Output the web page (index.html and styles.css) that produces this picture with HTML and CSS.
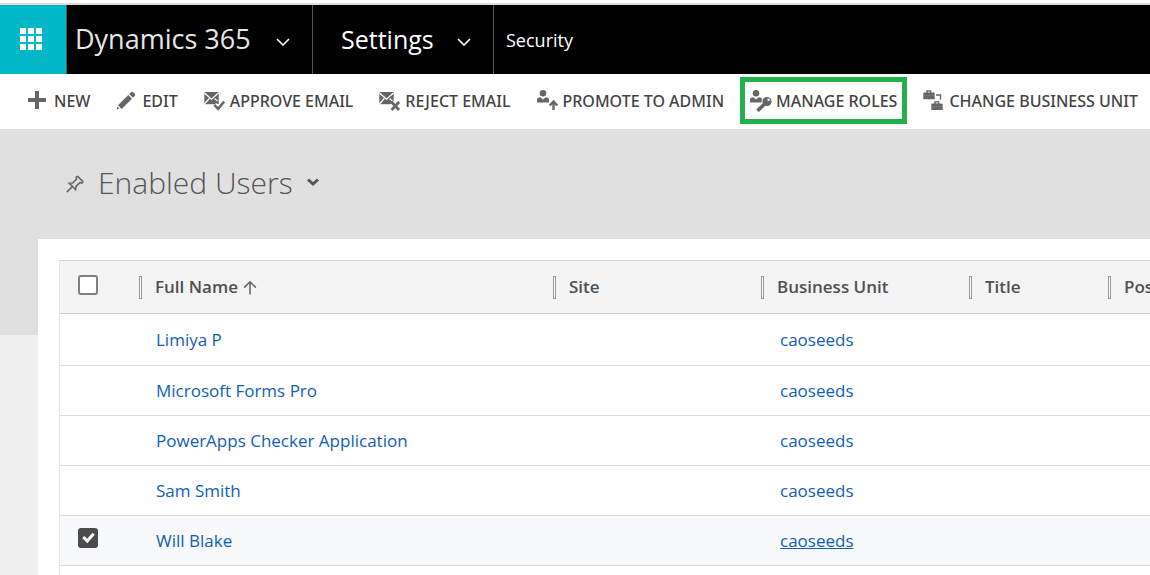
FILE: index.html
```
<!DOCTYPE html>
<html lang="en">
<head>
<meta charset="utf-8">
<title>Enabled Users - Dynamics 365</title>
<link rel="stylesheet" href="styles.css">
</head>
<body>
<header class="topbar">
  <button class="launcher" aria-label="App launcher">
    <svg width="22" height="22" viewBox="0 0 22 22" fill="#fff" aria-hidden="true"><path d="M0 0h6v6H0zM8 0h6v6H8zM16 0h6v6h-6zM0 8h6v6H0zM8 8h6v6H8zM16 8h6v6h-6zM0 16h6v6H0zM8 16h6v6H8zM16 16h6v6h-6z"/></svg>
  </button>
  <button class="nav nav-product"><span>Dynamics 365</span>
    <svg class="chevron" width="14" height="8" viewBox="0 0 14 8" aria-hidden="true"><path d="M1 1l6 6 6-6" fill="none" stroke="#fff" stroke-width="1.6"/></svg>
  </button>
  <button class="nav nav-area"><span>Settings</span>
    <svg class="chevron" width="14" height="8" viewBox="0 0 14 8" aria-hidden="true"><path d="M1 1l6 6 6-6" fill="none" stroke="#fff" stroke-width="1.6"/></svg>
  </button>
  <a class="nav-page" href="#security">Security</a>
</header>

<nav class="commands" aria-label="Commands">
  <button class="command">
    <svg class="icon" width="22" height="22" viewBox="0 0 22 22" aria-hidden="true"><path d="M7 1h4v7h7v4h-7v7H7v-7H0V8h7z"/></svg>NEW</button>
  <button class="command">
    <svg class="icon" width="22" height="22" viewBox="0 0 22 22" aria-hidden="true"><path d="M.6 19.400l.8-2.800 2 2zM2 15.300L12.300 5l3.700 3.700L5.700 19zM13.200 4.100l1.700-1.700c.9-.8 1.900-.7 2.700.1l1 1c.8.800.8 1.800.1 2.600L17 7.800z"/></svg>EDIT</button>
  <button class="command">
    <svg class="icon" width="22" height="22" viewBox="0 0 22 22" aria-hidden="true"><path d="M.3 2h14.400v12.200H.3z"/><path d="M.3 2.800l7.200 6.400 7.200-6.400M0 14.500l5.300-6M10.500 8.800l3 2" fill="none" stroke="#fff" stroke-width="1.300"/><path d="M10.300 14.800l3.800 4 6-7.200" fill="none" stroke="#fff" stroke-width="5"/><path d="M10.300 14.800l3.800 4 6-7.200" fill="none" stroke="#666" stroke-width="2.500"/></svg>APPROVE EMAIL</button>
  <button class="command">
    <svg class="icon" width="22" height="22" viewBox="0 0 22 22" aria-hidden="true"><path d="M.3 2h14.400v12.200H.3z"/><path d="M.3 2.800l7.200 6.400 7.200-6.400M0 14.500l5.300-6M10.500 8.800l3 2" fill="none" stroke="#fff" stroke-width="1.300"/><path d="M13 12.500l6.600 7M19.600 12.500l-6.600 7" fill="none" stroke="#fff" stroke-width="5"/><path d="M12.500 12l7.600 8M20.100 12l-7.600 8" fill="none" stroke="#666" stroke-width="2.700"/></svg>REJECT EMAIL</button>
  <button class="command">
    <svg class="icon" width="22" height="22" viewBox="0 0 22 22" aria-hidden="true"><circle cx="6" cy="3.300" r="3.300"/><path d="M0 12.500V9.500Q0 7.500 3.300 7.300L6 9.600 8.700 7.300Q12 7.500 12 9.500v3z"/><path d="M16.500 20v-8M12.700 15.500l3.800-4 3.800 4" fill="none" stroke="#666" stroke-width="2.400"/></svg>PROMOTE TO ADMIN</button>
  <button class="command highlighted">
    <svg class="icon" width="22" height="22" viewBox="0 0 22 22" aria-hidden="true"><circle cx="6" cy="3.300" r="3.300"/><path d="M0 12.500V9.500Q0 7.500 3.300 7.300L6 9.600 8.700 7.300Q12 7.500 12 9.500v3z"/><circle cx="17" cy="11.600" r="5.500" fill="#fff"/><path d="M14.500 14L7.500 20.800" stroke="#666" stroke-width="3.600"/><circle cx="17" cy="11.600" r="4.600"/><circle cx="18.600" cy="9.800" r="1.200" fill="#fff"/></svg>MANAGE ROLES</button>
  <button class="command">
    <svg class="icon" width="22" height="22" viewBox="0 0 22 22" aria-hidden="true"><path d="M3.300 2.500V.3h5v2.200h2.500q.9 0 .9.900v5.800H.3V3.400q0-.9.900-.9zM4.800 1.600v.9h2v-.9zM11.300 13.500v-2.200h5v2.200h2.500q.9 0 .9.900v5.600H8.300v-5.600q0-.9.900-.9zM12.800 12.600v.9h2v-.9z"/><path d="M.3 5.700h11.400M8.300 16.700h11.400" stroke="#888" stroke-width=".5"/><path d="M13 5h4.500v4.500" fill="none" stroke="#666" stroke-width="1.400"/></svg>CHANGE BUSINESS UNIT</button>
</nav>

<main class="content">
  <div class="view-head">
    <button class="pin" aria-label="Pin view"><svg width="18" height="18" viewBox="0 0 18 18" aria-hidden="true"><path d="M.8 17.200l5-5M3.200 8.200l6.300 6.300.7-3.500 3.900-3.400 2.200.2.500-1.400-5-5-1.500.6.2 2.200L6.700 8z" fill="none" stroke="#6b6b6b" stroke-width="1.700"/></svg></button>
    <h1 class="view-title">Enabled Users</h1>
    <button class="view-switch" aria-label="Change view"><svg width="12" height="9" viewBox="0 0 12 9" aria-hidden="true"><path d="M1 1.500l5 4.500 5-4.500" fill="none" stroke="#555" stroke-width="3"/></svg></button>
  </div>
  <section class="panel">
    <div class="grid-frame">
      <table class="grid">
        <colgroup><col class="col-check"><col class="col-name"><col class="col-site"><col class="col-unit"><col class="col-title"><col></colgroup>
        <thead>
          <tr>
            <td class="check-cell"><input type="checkbox" class="check" aria-label="Select all"></td>
            <th>Full Name<svg class="sort" width="14" height="15" viewBox="0 0 14 15" aria-hidden="true"><path d="M7 14.500V2M1.200 7.600L7 1.800l5.800 5.800" fill="none" stroke="#666" stroke-width="1.600"/></svg></th>
            <th>Site</th><th>Business Unit</th><th>Title</th><th>Pos</th>
          </tr>
        </thead>
        <tbody>
          <tr><td></td><td><a href="#u1">Limiya P</a></td><td></td><td class="unit"><a href="#bu">caoseeds</a></td><td></td><td></td></tr>
          <tr><td></td><td><a href="#u2">Microsoft Forms Pro</a></td><td></td><td class="unit"><a href="#bu">caoseeds</a></td><td></td><td></td></tr>
          <tr><td></td><td><a href="#u3">PowerApps Checker Application</a></td><td></td><td class="unit"><a href="#bu">caoseeds</a></td><td></td><td></td></tr>
          <tr><td></td><td><a href="#u4">Sam Smith</a></td><td></td><td class="unit"><a href="#bu">caoseeds</a></td><td></td><td></td></tr>
          <tr class="selected"><td class="check-cell"><input type="checkbox" class="check" checked aria-label="Select Will Blake"></td><td><a href="#u5">Will Blake</a></td><td></td><td class="unit"><a class="active" href="#bu">caoseeds</a></td><td></td><td></td></tr>
        </tbody>
      </table>
    </div>
  </section>
</main>
</body>
</html>
```
FILE: styles.css
```
*, *::before { box-sizing: border-box; }

body {
  margin: 0;
  height: 100vh;
  overflow: hidden;
  display: flex;
  flex-direction: column;
  padding-top: 3px;
  background: #fff;
  color: #444;
  font-family: "Segoe UI", "Open Sans", "Noto Sans", sans-serif;
}

button {
  margin: 0;
  padding: 0;
  border: 0;
  background: none;
  color: inherit;
  font: inherit;
  white-space: nowrap;
}

a { color: #1160b7; text-decoration: none; }

svg { display: block; flex: none; }

.topbar {
  flex: none;
  display: flex;
  height: 71px;
  border-top: 2px solid #dcdce0;
  background: #000;
  color: #fff;
}

.launcher {
  display: flex;
  align-items: center;
  justify-content: center;
  width: 66px;
  padding: 0 4px 2px 0;
  background: #00b7c7;
}

.nav {
  display: flex;
  align-items: center;
  justify-content: space-between;
  border-left: 1px solid #555;
  line-height: 36px;
}

.nav-product { width: 246px; padding: 0 22px 2px 8px; color: #e6e6e6; font-size: 27px; }
.nav-area { width: 181px; padding: 0 22px 2px 28px; font-size: 25px; }
.chevron { margin-top: 7px; }

.nav-page {
  display: flex;
  align-items: center;
  border-left: 1px solid #555;
  padding-left: 12px;
  color: #fff;
  font-size: 18px;
}

.commands {
  flex: none;
  display: flex;
  align-items: center;
  gap: 26px;
  height: 55px;
  padding: 0 0 2px 28px;
}

.command {
  display: flex;
  align-items: center;
  gap: 4px;
  height: 37px;
  font-family: "Segoe UI", "Noto Sans", "Open Sans", sans-serif;
  font-size: 16px;
  font-weight: 500;
}

.icon { fill: #666; }

.highlighted {
  outline: 5px solid #22b14c;
  outline-offset: 5px;
  height: 27px;
}

.content {
  flex: 1;
  display: flex;
  flex-direction: column;
  min-height: 0;
  padding-left: 38px;
  background: linear-gradient(#e0e0e0 206px, #f0f0f0 206px);
}

.view-head {
  flex: none;
  display: flex;
  align-items: center;
  height: 110px;
  padding-left: 28px;
}

.view-title {
  margin: 0 14px 2px 14px;
  font-size: 30px;
  font-weight: 300;
  line-height: 44px;
  color: #555;
}

.view-switch { padding-bottom: 4px; }

.panel {
  flex: 1;
  display: flex;
  min-height: 0;
  padding: 21px 0 0 21px;
  background: #fff;
}

.grid-frame {
  flex: 1;
  min-width: 0;
  border-left: 1px solid #e6e6e6;
}

.grid {
  width: 100%;
  table-layout: fixed;
  border-collapse: separate;
  border-spacing: 0;
  font-size: 17px;
}

.col-check { width: 79px; }
.col-name { width: 414px; }
.col-site, .col-unit { width: 208px; }
.col-title { width: 139px; }

.grid th, .grid td {
  height: 50px;
  padding: 0 0 0 17px;
  border-bottom: 1px solid #dcdcdc;
  text-align: left;
  white-space: nowrap;
  overflow: hidden;
}

.grid thead th, .grid thead td {
  height: 54px;
  border-top: 1px solid #d2d2d2;
  border-bottom-color: #d2d2d2;
  background: #f4f4f4;
}

.grid th {
  padding-left: 0;
  font-weight: 600;
  color: #505050;
}

.grid th::before {
  content: "";
  display: inline-block;
  width: 3px;
  height: 23px;
  margin-right: 13px;
  border: 1px solid #999;
  background: #fff;
  vertical-align: middle;
}

.grid tbody tr:first-child td { height: 52px; }
.grid .unit { padding-left: 19px; }
.grid .check-cell { padding-left: 18px; padding-bottom: 4px; }
.grid .selected .check-cell { padding-bottom: 6px; }
.selected td { background: #f8f9fb; }
.active { text-decoration: underline; }

.sort {
  display: inline-block;
  margin-left: 5px;
  vertical-align: -2px;
}

.check {
  appearance: none;
  display: block;
  width: 20px;
  height: 20px;
  margin: 0;
  border: 2px solid #808080;
  border-radius: 3px;
  background: #fff;
}

.check:checked {
  border-color: #4c4c4c;
  background: #4c4c4c;
}

.check:checked::before {
  content: "";
  display: block;
  width: 7px;
  height: 11px;
  margin: 1px 0 0 5px;
  border: solid #fff;
  border-width: 0 3px 3px 0;
  transform: rotate(42deg);
}
```
